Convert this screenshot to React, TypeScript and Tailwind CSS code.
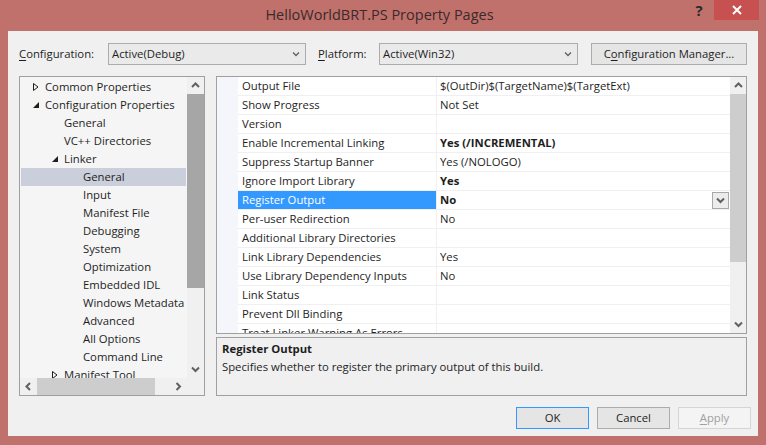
import React from 'react';

type TreeItem = {
  label: string;
  level: 1 | 2 | 3;
  icon?: 'open' | 'closed';
  selected?: boolean;
};

const treeItems: TreeItem[] = [
  { label: 'Common Properties', level: 1, icon: 'closed' },
  { label: 'Configuration Properties', level: 1, icon: 'open' },
  { label: 'General', level: 2 },
  { label: 'VC++ Directories', level: 2 },
  { label: 'Linker', level: 2, icon: 'open' },
  { label: 'General', level: 3, selected: true },
  { label: 'Input', level: 3 },
  { label: 'Manifest File', level: 3 },
  { label: 'Debugging', level: 3 },
  { label: 'System', level: 3 },
  { label: 'Optimization', level: 3 },
  { label: 'Embedded IDL', level: 3 },
  { label: 'Windows Metadata', level: 3 },
  { label: 'Advanced', level: 3 },
  { label: 'All Options', level: 3 },
  { label: 'Command Line', level: 3 },
  { label: 'Manifest Tool', level: 2, icon: 'closed' },
];

type PropRow = {
  name: string;
  value?: string;
  bold?: boolean;
  selected?: boolean;
};

const propRows: PropRow[] = [
  { name: 'Output File', value: '$(OutDir)$(TargetName)$(TargetExt)' },
  { name: 'Show Progress', value: 'Not Set' },
  { name: 'Version' },
  { name: 'Enable Incremental Linking', value: 'Yes (/INCREMENTAL)', bold: true },
  { name: 'Suppress Startup Banner', value: 'Yes (/NOLOGO)' },
  { name: 'Ignore Import Library', value: 'Yes', bold: true },
  { name: 'Register Output', value: 'No', bold: true, selected: true },
  { name: 'Per-user Redirection', value: 'No' },
  { name: 'Additional Library Directories' },
  { name: 'Link Library Dependencies', value: 'Yes' },
  { name: 'Use Library Dependency Inputs', value: 'No' },
  { name: 'Link Status' },
  { name: 'Prevent Dll Binding' },
  { name: 'Treat Linker Warning As Errors' },
];

// Windows 8 style scroll arrow chevron
function Chevron({ dir, className = '' }: { dir: 'up' | 'down' | 'left' | 'right'; className?: string }) {
  const points = {
    up: '1,5 4.5,1.5 8,5',
    down: '1,1.5 4.5,5 8,1.5',
    left: '5,1 1.5,4.5 5,8',
    right: '1.5,1 5,4.5 1.5,8',
  }[dir];
  const vertical = dir === 'up' || dir === 'down';
  return (
    <svg
      width={vertical ? 9 : 7}
      height={vertical ? 7 : 9}
      viewBox={vertical ? '0 0 9 7' : '0 0 7 9'}
      className={className}
    >
      <polyline points={points} fill="none" stroke="#606060" strokeWidth="2" />
    </svg>
  );
}

function ComboArrow() {
  return (
    <svg width="8" height="6" viewBox="0 0 8 6">
      <polyline points="1,1.5 4,4.5 7,1.5" fill="none" stroke="#606060" strokeWidth="1.3" />
    </svg>
  );
}

function TreeGlyph({ kind }: { kind: 'open' | 'closed' }) {
  if (kind === 'closed') {
    return (
      <svg width="8" height="10" viewBox="0 0 8 10">
        <polygon points="1.5,1.5 6,5 1.5,8.5" fill="none" stroke="#1e1e1e" strokeWidth="1" />
      </svg>
    );
  }
  return (
    <svg width="8" height="10" viewBox="0 0 8 10">
      <polygon points="7,2 7,8 1,8" fill="#1e1e1e" />
    </svg>
  );
}

function Underlined({ text, index }: { text: string; index: number }) {
  return (
    <>
      {text.slice(0, index)}
      <span className="underline underline-offset-2">{text[index]}</span>
      {text.slice(index + 1)}
    </>
  );
}

export default function App() {
  return (
    <div className="w-[766px] h-[445px] bg-[#c0716c] flex flex-col font-['Open_Sans',sans-serif] text-[11.3px] text-[#1e1e1e] overflow-hidden">
      {/* Title bar */}
      <div className="h-[31px] flex items-start shrink-0">
        <div className="flex-1" />
        <div className="pt-[4px] text-[14.5px] text-[#3a2a2a] whitespace-nowrap">
          HelloWorldBRT.PS Property Pages
        </div>
        <div className="flex-1 flex justify-end items-start pr-[7px]">
          <div className="w-[30px] h-[20px] flex items-center justify-center text-[15px] font-bold text-[#2a2a2a]">
            ?
          </div>
          <div className="w-[45px] h-[20px] bg-[#c75050] flex items-center justify-center">
            <svg width="10" height="10" viewBox="0 0 10 10">
              <path d="M1 1 L9 9 M9 1 L1 9" stroke="#ffffff" strokeWidth="2" />
            </svg>
          </div>
        </div>
      </div>

      {/* Client area */}
      <div className="mx-[8px] h-[405px] bg-[#f0f0f0] flex flex-col px-[11px]">
        {/* Configuration row */}
        <div className="mt-[12px] h-[22px] flex items-center shrink-0">
          <div className="w-[89px]">
            <Underlined text="Configuration:" index={0} />
          </div>
          <div className="w-[198px] h-[22px] border border-[#acacac] bg-[#eaeaea] flex items-center justify-between pl-[3px] pr-[5px]">
            <span>Active(Debug)</span>
            <ComboArrow />
          </div>
          <div className="ml-[12px] w-[61px]">
            <Underlined text="Platform:" index={0} />
          </div>
          <div className="w-[199px] h-[22px] border border-[#acacac] bg-[#eaeaea] flex items-center justify-between pl-[3px] pr-[5px]">
            <span>Active(Win32)</span>
            <ComboArrow />
          </div>
          <div className="ml-[13px] w-[156px] h-[22px] border border-[#acacac] bg-[#e5e5e5] flex items-center justify-center">
            <Underlined text="Configuration Manager..." index={1} />
          </div>
        </div>

        {/* Main area */}
        <div className="mt-[11px] h-[320px] flex gap-[11px] shrink-0">
          {/* Tree */}
          <div className="w-[186px] h-full border border-[#a0a0a0] bg-[#f5f5f5] grid grid-cols-[1fr_17px] grid-rows-[1fr_17px]">
            <div className="overflow-hidden pt-[1px]">
              {treeItems.map((item, i) => (
                <div
                  key={i}
                  className={`h-[18px] mx-[1px] flex items-center whitespace-nowrap ${item.selected ? 'bg-[#cbcfdb]' : ''} ${
                    item.level === 1 ? 'pl-[9px]' : item.level === 2 ? 'pl-[28px]' : 'pl-[47px]'
                  }`}
                >
                  <div className="w-[15px] flex items-center pl-[2px]">
                    {item.icon && <TreeGlyph kind={item.icon} />}
                  </div>
                  <span>{item.label}</span>
                </div>
              ))}
            </div>
            {/* Vertical scrollbar */}
            <div className="bg-[#f0f0f0] flex flex-col">
              <div className="h-[17px] flex items-center justify-center">
                <Chevron dir="up" />
              </div>
              <div className="h-[194px] bg-[#a6a6a6]" />
              <div className="flex-1" />
              <div className="h-[17px] flex items-center justify-center">
                <Chevron dir="down" />
              </div>
            </div>
            {/* Horizontal scrollbar */}
            <div className="bg-[#f0f0f0] flex items-stretch">
              <div className="w-[17px] flex items-center justify-center">
                <Chevron dir="left" />
              </div>
              <div className="w-[118px] bg-[#cdcdcd]" />
              <div className="flex-1" />
              <div className="w-[17px] flex items-center justify-center">
                <Chevron dir="right" />
              </div>
            </div>
            <div className="bg-[#f0f0f0]" />
          </div>

          {/* Right column */}
          <div className="w-[531px] flex flex-col">
            {/* Property grid */}
            <div className="h-[258px] border border-[#a0a0a0] bg-white flex overflow-hidden">
              <div className="w-[21px] bg-[#f4f6fb] shrink-0" />
              <div className="flex-1 overflow-hidden">
                {propRows.map((row, i) => (
                  <div key={i} className="h-[19px] flex border-b border-[#f0f0f2] whitespace-nowrap">
                    <div
                      className={`w-[199px] pl-[4px] pt-[1px] flex items-center border-r border-[#f0f0f2] ${
                        row.selected ? 'bg-[#3399ff] text-white' : ''
                      }`}
                    >
                      {row.name}
                    </div>
                    <div className={`flex-1 pl-[3px] flex items-center justify-between ${row.bold ? 'font-bold' : ''}`}>
                      <span className="pt-[1px]">{row.value}</span>
                      {row.selected && (
                        <div className="w-[17px] h-[17px] mr-[1px] border border-[#a8a8a8] bg-[#ececec] flex items-center justify-center">
                          <Chevron dir="down" />
                        </div>
                      )}
                    </div>
                  </div>
                ))}
              </div>
              {/* Grid scrollbar */}
              <div className="w-[16px] bg-[#f0f0f0] flex flex-col shrink-0">
                <div className="h-[17px] flex items-center justify-center">
                  <Chevron dir="up" />
                </div>
                <div className="h-[168px] bg-[#cdcdcd]" />
                <div className="flex-1" />
                <div className="h-[17px] flex items-center justify-center">
                  <Chevron dir="down" />
                </div>
              </div>
            </div>

            {/* Description */}
            <div className="mt-[3px] h-[59px] border border-[#a0a0a0] px-[5px] pt-[2px]">
              <div className="font-bold leading-[18px]">Register Output</div>
              <div className="leading-[18px]">Specifies whether to register the primary output of this build.</div>
            </div>
          </div>
        </div>

        {/* Buttons */}
        <div className="mt-[11px] h-[22px] flex justify-end gap-[8px] mr-[-4px]">
          <div className="w-[73px] h-[22px] border border-[#3399ff] bg-[#e5e5e5] flex items-center justify-center">
            OK
          </div>
          <div className="w-[73px] h-[22px] border border-[#acacac] bg-[#e5e5e5] flex items-center justify-center">
            Cancel
          </div>
          <div className="w-[73px] h-[22px] border border-[#d5d5d5] bg-[#f4f4f4] flex items-center justify-center text-[#a0a0a0]">
            <Underlined text="Apply" index={0} />
          </div>
        </div>
      </div>
      <div className="flex-1" />
    </div>
  );
}
